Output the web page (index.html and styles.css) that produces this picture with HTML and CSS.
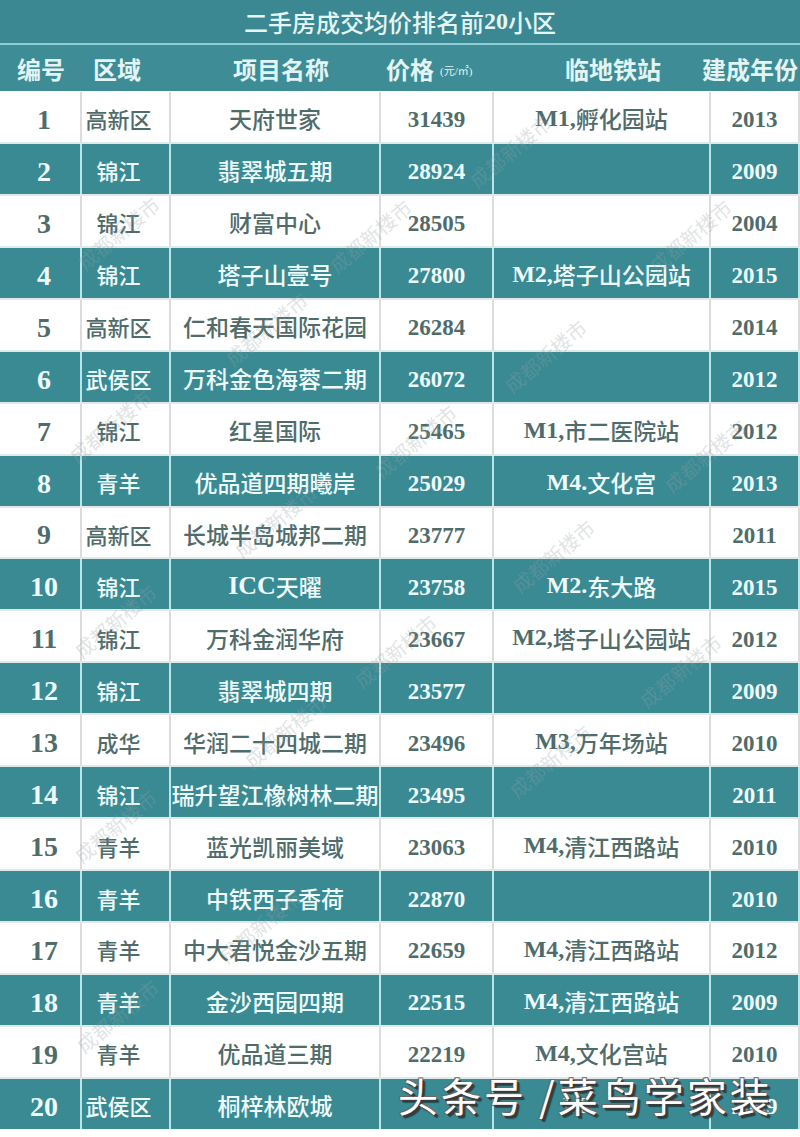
FILE: index.html
```html
<!DOCTYPE html>
<html lang="zh-CN">
<head>
<meta charset="utf-8">
<title>二手房成交均价排名前20小区</title>
<link rel="stylesheet" href="styles.css">
</head>
<body>
<div class="sheet">
  <div class="title">二手房成交均价排名前<b class="tnum">20</b>小区</div>
  <div class="head">
    <div class="h h1">编号</div>
    <div class="h h2">区域</div>
    <div class="h h3">项目名称</div>
    <div class="h h4">价格<span class="unit">(元/㎡)</span></div>
    <div class="h h5">临地铁站</div>
    <div class="h h6">建成年份</div>
  </div>
  <div class="rows">
    <div class="row odd"><div class="c no">1</div><div class="c area">高新区</div><div class="c name">天府世家</div><div class="c num">31439</div><div class="c st"><b>M1,</b>孵化园站</div><div class="c num yr">2013</div></div>
    <div class="row even"><div class="c no">2</div><div class="c area">锦江</div><div class="c name">翡翠城五期</div><div class="c num">28924</div><div class="c st"></div><div class="c num yr">2009</div></div>
    <div class="row odd"><div class="c no">3</div><div class="c area">锦江</div><div class="c name">财富中心</div><div class="c num">28505</div><div class="c st"></div><div class="c num yr">2004</div></div>
    <div class="row even"><div class="c no">4</div><div class="c area">锦江</div><div class="c name">塔子山壹号</div><div class="c num">27800</div><div class="c st"><b>M2,</b>塔子山公园站</div><div class="c num yr">2015</div></div>
    <div class="row odd"><div class="c no">5</div><div class="c area">高新区</div><div class="c name">仁和春天国际花园</div><div class="c num">26284</div><div class="c st"></div><div class="c num yr">2014</div></div>
    <div class="row even"><div class="c no">6</div><div class="c area">武侯区</div><div class="c name">万科金色海蓉二期</div><div class="c num">26072</div><div class="c st"></div><div class="c num yr">2012</div></div>
    <div class="row odd"><div class="c no">7</div><div class="c area">锦江</div><div class="c name">红星国际</div><div class="c num">25465</div><div class="c st"><b>M1,</b>市二医院站</div><div class="c num yr">2012</div></div>
    <div class="row even"><div class="c no">8</div><div class="c area">青羊</div><div class="c name">优品道四期曦岸</div><div class="c num">25029</div><div class="c st"><b>M4.</b>文化宫</div><div class="c num yr">2013</div></div>
    <div class="row odd"><div class="c no">9</div><div class="c area">高新区</div><div class="c name">长城半岛城邦二期</div><div class="c num">23777</div><div class="c st"></div><div class="c num yr">2011</div></div>
    <div class="row even"><div class="c no">10</div><div class="c area">锦江</div><div class="c name"><b class="big">ICC</b>天曜</div><div class="c num">23758</div><div class="c st"><b>M2.</b>东大路</div><div class="c num yr">2015</div></div>
    <div class="row odd"><div class="c no">11</div><div class="c area">锦江</div><div class="c name">万科金润华府</div><div class="c num">23667</div><div class="c st"><b>M2,</b>塔子山公园站</div><div class="c num yr">2012</div></div>
    <div class="row even"><div class="c no">12</div><div class="c area">锦江</div><div class="c name">翡翠城四期</div><div class="c num">23577</div><div class="c st"></div><div class="c num yr">2009</div></div>
    <div class="row odd"><div class="c no">13</div><div class="c area">成华</div><div class="c name">华润二十四城二期</div><div class="c num">23496</div><div class="c st"><b>M3,</b>万年场站</div><div class="c num yr">2010</div></div>
    <div class="row even"><div class="c no">14</div><div class="c area">锦江</div><div class="c name">瑞升望江橡树林二期</div><div class="c num">23495</div><div class="c st"></div><div class="c num yr">2011</div></div>
    <div class="row odd"><div class="c no">15</div><div class="c area">青羊</div><div class="c name">蓝光凯丽美域</div><div class="c num">23063</div><div class="c st"><b>M4,</b>清江西路站</div><div class="c num yr">2010</div></div>
    <div class="row even"><div class="c no">16</div><div class="c area">青羊</div><div class="c name">中铁西子香荷</div><div class="c num">22870</div><div class="c st"></div><div class="c num yr">2010</div></div>
    <div class="row odd"><div class="c no">17</div><div class="c area">青羊</div><div class="c name">中大君悦金沙五期</div><div class="c num">22659</div><div class="c st"><b>M4,</b>清江西路站</div><div class="c num yr">2012</div></div>
    <div class="row even"><div class="c no">18</div><div class="c area">青羊</div><div class="c name">金沙西园四期</div><div class="c num">22515</div><div class="c st"><b>M4,</b>清江西路站</div><div class="c num yr">2009</div></div>
    <div class="row odd"><div class="c no">19</div><div class="c area">青羊</div><div class="c name">优品道三期</div><div class="c num">22219</div><div class="c st"><b>M4,</b>文化宫站</div><div class="c num yr">2010</div></div>
    <div class="row even"><div class="c no">20</div><div class="c area">武侯区</div><div class="c name">桐梓林欧城</div><div class="c num"></div><div class="c st st-hidden"><b>M</b></div><div class="c num yr">2009</div></div>
  </div>

  <div class="wm" style="left:460px;top:138px">成都新楼市</div>
  <div class="wm" style="left:68px;top:220px">成都新楼市</div>
  <div class="wm" style="left:320px;top:223px">成都新楼市</div>
  <div class="wm" style="left:640px;top:223px">成都新楼市</div>
  <div class="wm" style="left:216px;top:316px">成都新楼市</div>
  <div class="wm" style="left:495px;top:343px">成都新楼市</div>
  <div class="wm" style="left:60px;top:413px">成都新楼市</div>
  <div class="wm" style="left:365px;top:428px">成都新楼市</div>
  <div class="wm" style="left:655px;top:443px">成都新楼市</div>
  <div class="wm" style="left:225px;top:508px">成都新楼市</div>
  <div class="wm" style="left:503px;top:543px">成都新楼市</div>
  <div class="wm" style="left:65px;top:608px">成都新楼市</div>
  <div class="wm" style="left:345px;top:638px">成都新楼市</div>
  <div class="wm" style="left:630px;top:658px">成都新楼市</div>
  <div class="wm" style="left:235px;top:718px">成都新楼市</div>
  <div class="wm" style="left:500px;top:748px">成都新楼市</div>
  <div class="wm" style="left:65px;top:813px">成都新楼市</div>
  <div class="wm" style="left:210px;top:913px">成都新楼市</div>
  <div class="wm" style="left:67px;top:1003px">成都新楼市</div>

  <div class="stamp">头条号 /菜鸟学家装</div>
</div>
</body>
</html>
```

FILE: styles.css
```css
html, body {
  margin: 0;
  padding: 0;
  background: #ffffff;
}

.sheet {
  position: relative;
  width: 800px;
  height: 1137px;
  overflow: hidden;
  background: #ffffff;
  font-family: "Liberation Serif", "Noto Sans CJK SC", serif;
}

.title {
  height: 45px;
  background: #3b8892;
  border-bottom: 2px solid #8fcdd4;
  color: #e4f5f5;
  font-family: "Liberation Serif", "Noto Sans CJK SC", serif;
  font-size: 24px;
  font-weight: 500;
  display: flex;
  align-items: center;
  justify-content: center;
  padding-bottom: 1px;
  box-sizing: border-box;
}

.tnum {
  font-weight: 700;
}

.head {
  height: 46px;
  background: #3e8c96;
  display: grid;
  grid-template-columns: 80px 89px 210px 107px 214px 100px;
  color: #e2f4f4;
  font-size: 24px;
  font-weight: 700;
  font-family: "Noto Sans CJK SC", sans-serif;
  margin-bottom: 1px;
}

.h {
  display: flex;
  align-items: center;
  white-space: nowrap;
}
.h1 { padding-left: 17px; }
.h2 { padding-left: 13px; }
.h3 { padding-left: 64px; }
.h4 { padding-left: 7px; }
.h5 { padding-left: 79px; }
.h6 { padding-left: 2px; }

.unit {
  font-family: "Liberation Serif", "Noto Sans CJK SC", serif;
  font-size: 11px;
  font-weight: 400;
  margin-left: 6px;
  position: relative;
  top: 2px;
}

.rows {
  display: flex;
  flex-direction: column;
  gap: 2px;
  background: #dfe9ea;
}

.row {
  height: 49.95px;
  display: grid;
  grid-template-columns: 80px 87px 208px 111px 215px 87px;
  column-gap: 2px;
}

.row.odd { background: #dcdcdc; }
.row.even { background: #b9e4ea; }

.c {
  display: flex;
  align-items: center;
  justify-content: center;
  white-space: nowrap;
  padding-top: 3px;
  box-sizing: border-box;
}

.row.odd .c { background: #ffffff; color: #4f6c6b; }
.row.even .c { background: #3a8a94; color: #effbfb; }

.no {
  font-family: "Liberation Serif", serif;
  font-weight: 700;
  font-size: 28px;
  padding-left: 8px;
  padding-top: 6px;
}

.area {
  font-family: "Noto Sans CJK SC", sans-serif;
  font-size: 22px;
  font-weight: 500;
  padding-right: 14px;
}

.name {
  font-family: "Liberation Serif", "Noto Sans CJK SC", serif;
  font-size: 23px;
  font-weight: 500;
}

.name .big {
  font-size: 26px;
  font-weight: 700;
}

.num {
  font-family: "Liberation Serif", serif;
  font-weight: 700;
  font-size: 23px;
  padding-top: 7px;
}

.st {
  font-family: "Liberation Serif", "Noto Sans CJK SC", serif;
  font-size: 23px;
  font-weight: 500;
}

.st b {
  font-family: "Liberation Serif", serif;
  font-weight: 700;
  font-size: 24px;
}

.st-hidden {
  justify-content: flex-start;
  padding-left: 69px;
}

.wm {
  position: absolute;
  width: 104px;
  height: 24px;
  line-height: 24px;
  font-family: "Noto Sans CJK SC", sans-serif;
  font-size: 20px;
  color: rgba(150, 160, 160, 0.3);
  transform: rotate(-40deg);
  transform-origin: 50% 50%;
  white-space: nowrap;
  pointer-events: none;
}

.stamp {
  position: absolute;
  left: 398px;
  top: 1070px;
  font-family: "Noto Sans CJK SC", sans-serif;
  font-size: 40px;
  letter-spacing: 3px;
  line-height: 50px;
  color: #ffffff;
  white-space: nowrap;
  text-shadow: 2px 2px 0 #3a3a3a, -1px -1px 0 #6a6a6a, 1px -1px 0 #6a6a6a, -1px 1px 0 #6a6a6a, 3px 3px 1px rgba(0,0,0,0.5);
}
```
